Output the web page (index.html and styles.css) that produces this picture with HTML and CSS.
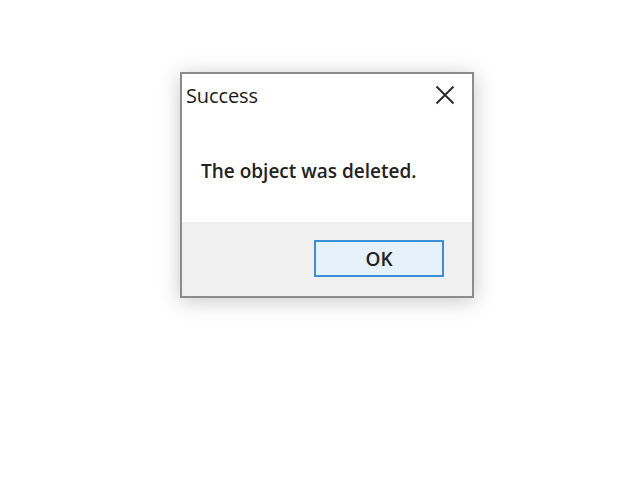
FILE: index.html
```html
<!DOCTYPE html>
<html>
<head>
<meta charset="utf-8">
<link rel="stylesheet" href="styles.css">
</head>
<body>
<div class="dialog">
  <div class="titlebar">
    <span class="title">Success</span>
    <span class="close">
      <svg width="20" height="20" viewBox="0 0 20 20"><path d="M1.5 1.5 L18.5 18.5 M18.5 1.5 L1.5 18.5" stroke="#2b2b2b" stroke-width="2" fill="none"/></svg>
    </span>
  </div>
  <div class="content">
    <p class="message">The object was deleted.</p>
  </div>
  <div class="footer">
    <button class="ok">OK</button>
  </div>
</div>
</body>
</html>
```
FILE: styles.css
```css
html, body {
  margin: 0;
  padding: 0;
  background: #ffffff;
}
body {
  width: 640px;
  height: 484px;
  overflow: hidden;
  font-family: "Open Sans", "Noto Sans", sans-serif;
}
.dialog {
  margin-left: 180px;
  margin-top: 72px;
  width: 290px;
  height: 222px;
  border: 2px solid #8c8c8c;
  background: #ffffff;
  box-shadow: 0 3px 20px rgba(0, 0, 0, 0.22);
  display: flex;
  flex-direction: column;
}
.titlebar {
  height: 42px;
  display: flex;
  align-items: center;
  justify-content: space-between;
  padding-left: 4px;
  padding-right: 17px;
}
.title {
  font-size: 20px;
  color: #1a1a1a;
  letter-spacing: -0.1px;
}
.close {
  display: flex;
  width: 20px;
  height: 20px;
}
.content {
  flex: 1;
  padding-left: 19px;
}
.message {
  margin: 0;
  padding-top: 42px;
  font-size: 19px;
  font-weight: 600;
  color: #222222;
  letter-spacing: 0;
}
.footer {
  height: 74px;
  background: #f0f0f0;
  display: flex;
  justify-content: flex-end;
  align-items: flex-start;
  padding-right: 28px;
  padding-top: 18px;
  box-sizing: border-box;
}
.ok {
  width: 130px;
  height: 37px;
  border: 2px solid #3a8fd6;
  background: #e5f1fb;
  font-family: "Open Sans", "Noto Sans", sans-serif;
  font-size: 19px;
  font-weight: 600;
  color: #222222;
  padding: 0;
}
```
